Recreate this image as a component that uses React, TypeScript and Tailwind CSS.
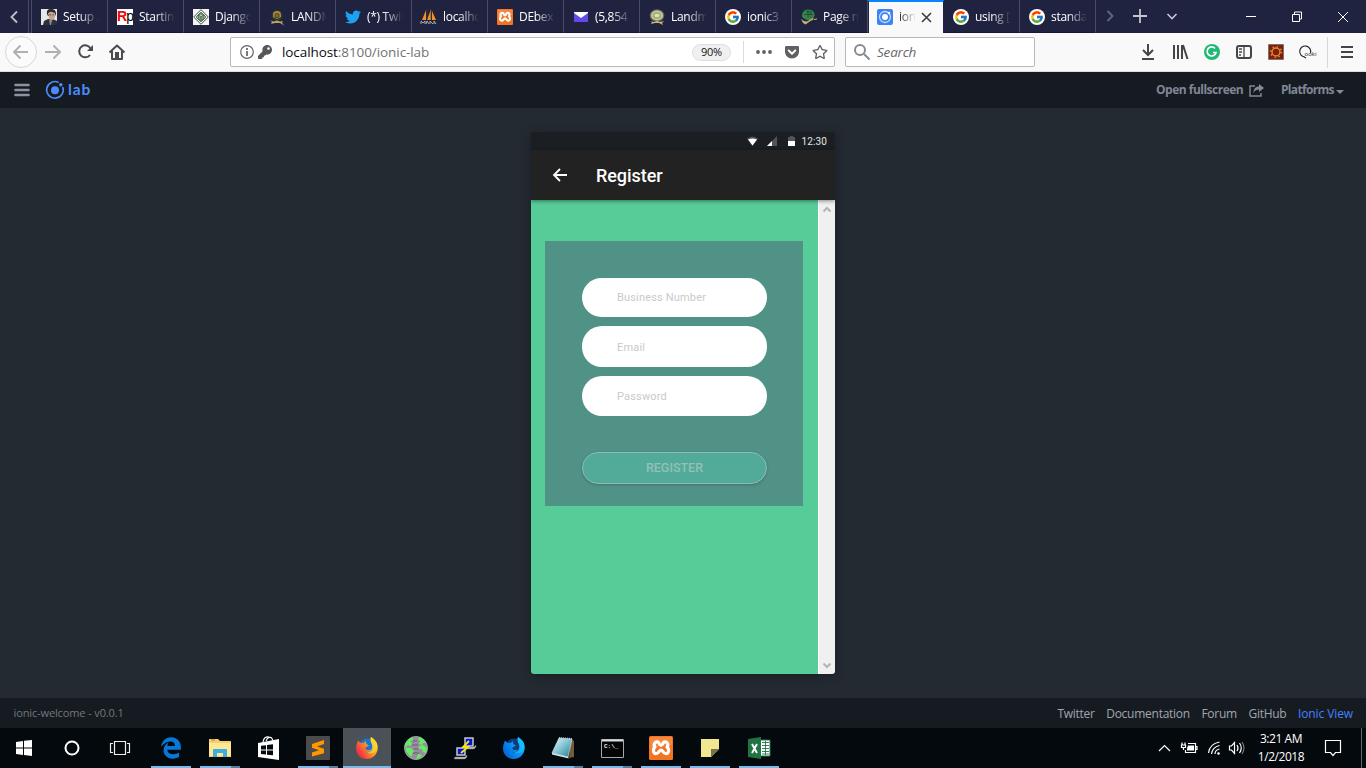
import type { ReactNode } from "react";
import { FcGoogle } from "react-icons/fc";
import { FaTwitter, FaEdgeLegacy, FaGetPocket, FaKey, FaRegStar } from "react-icons/fa";

const svg = "block shrink-0 overflow-visible";

function Google() {
  return (
    <span className="flex size-4 items-center justify-center rounded-full bg-white">
      <FcGoogle className="size-[14px]" />
    </span>
  );
}

function Xampp({ big = false }: { big?: boolean }) {
  return (
    <svg viewBox="0 0 24 24" className={big ? "block size-6" : "block size-4"}>
      <rect width="24" height="24" rx="1.500" fill="#f47321" />
      <path d="M1 1h22v8q-11 0-22 4z" fill="#fa9a5c" opacity=".5" />
      <path
        d="M9 6c-3-1-5 2.500-3 5-2.500 2-2 7 1.500 6.500 2.500-.3 2.500-3.500 4.500-3.500s2 3.200 4.500 3.500c3.500.5 4-4.500 1.500-6.500 2-2.500 0-6-3-5-1.600.6-1 3.500-3 3.500S10.600 6.600 9 6z"
        fill="none"
        stroke="#fff"
        strokeWidth="3.200"
        strokeLinejoin="round"
      />
    </svg>
  );
}

function Portrait() {
  return (
    <svg viewBox="0 0 16 16" className={`${svg} size-4`}>
      <path fill="#e5e7e8" d="M0 0h16v16H0z" />
      <path fill="#2e3236" d="M2 16l1-4 4-2h5l4 2v4z" />
      <path fill="#23272a" d="M6 5q-1-5 4-5 5 0 5 5l-1 2H7z" />
      <path fill="#c9a18e" d="M7 4l3-1.500L14 4v4l-2 3-2 .500L8 9z" />
      <path fill="#87929b" d="M8 10l3 1.500L10 16H9z" />
      <path fill="#333" d="M8.500 5.500h1.500v.8H8.500zm3 0H13v.8h-1.500z" />
    </svg>
  );
}

function Diamond() {
  return (
    <svg viewBox="0 0 16 16" className={`${svg} size-4`}>
      <path fill="#f4f5f2" d="M0 0h16v16H0z" />
      <path d="M8 .7L15.300 8 8 15.300.7 8z" fill="none" stroke="#454f48" strokeWidth="1" />
      <path d="M8 3L13 8 8 13 3 8z" fill="#dce8dd" stroke="#44604c" strokeWidth=".8" />
      <path d="M5 6l3-1.500L11 6v4l-3 1.500L5 10zM5 6l3 1.500L11 6M8 7.500v4" fill="#86ab8f" stroke="#325942" strokeWidth=".8" />
    </svg>
  );
}

function Crest({ light = false }: { light?: boolean }) {
  return light ? (
    <svg viewBox="0 0 16 16" className={`${svg} size-4`}>
      <ellipse cx="8" cy="6.500" rx="7.300" ry="6.300" fill="#6f6a55" />
      <ellipse cx="8" cy="6.500" rx="6" ry="5" fill="#cfc89c" />
      <ellipse cx="8" cy="6.500" rx="4.300" ry="3.500" fill="#8fb67c" />
      <ellipse cx="8" cy="6.500" rx="2.500" ry="1.800" fill="#e3dfae" />
      <path d="M1 12l4 1 3-1 3 1 4-1-2 2 1 2-4-2H6l-4 1 1-2z" fill="#cdb978" />
    </svg>
  ) : (
    <svg viewBox="0 0 16 16" className={`${svg} size-4`}>
      <ellipse cx="8" cy="6.500" rx="5.500" ry="5.500" fill="#2c3a26" />
      <path d="M4 6q0-4 4-4t4 4v2l-4 2-4-2z" fill="#a58a45" />
      <circle cx="8" cy="6.500" r="2.600" fill="#31592f" />
      <circle cx="8" cy="6.500" r="1.500" fill="#c24a30" />
      <path d="M1 11.500l4 1 3-1 3 1 3-.500-1 1.500 2 3-4-2.500H6l-4 1 1-2z" fill="#c0a263" />
    </svg>
  );
}

function Sails() {
  return (
    <svg viewBox="0 0 16 16" className={`${svg} size-4`}>
      <path d="M5 1L1 11h4zm5-1L6 11h4zM11 2v9h4z" fill="#f29122" />
      <path d="M6 0v11M10 0v11" stroke="#473a36" strokeWidth=".7" />
      <path d="M0 15v-3l2 2 2-2v3m1 0l1-3 2 3m1 0v-3l3 3m1 0v-3l2 3" stroke="#aaa" fill="none" />
    </svg>
  );
}

function Turtle() {
  return (
    <svg viewBox="0 0 16 16" className={`${svg} size-4`}>
      <path d="M1 7q0-6 6-6.500 6.500 0 6.500 6l-1.500 4-5 1L2 9z" fill="#2c8a4d" />
      <path d="M3 5.500h9M5 3h6M7 1v8M10 2v7" stroke="#12502f" strokeWidth=".9" />
      <path d="M4.500 7h2m3 0h2" stroke="#b64535" strokeWidth="1.300" />
      <path d="M0 10l3 2 3 .500 6-3.500.500 1.500-3 1.500-5 3.500-2.500-1.500z" fill="#c7b16a" />
      <path d="M13 10.500l3-.500" stroke="#c7b16a" />
    </svg>
  );
}

function IonicMark({ tab = false }: { tab?: boolean }) {
  return tab ? (
    <svg viewBox="0 0 16 16" className={`${svg} size-4`}>
      <rect width="16" height="16" rx="2" fill="#3e83f3" />
      <circle cx="8" cy="8" r="5.500" fill="none" stroke="#c5dcff" strokeWidth="1.300" />
      <circle cx="8" cy="8" r="3" fill="#fff" />
      <circle cx="12" cy="4" r="1.300" fill="#fff" />
    </svg>
  ) : (
    <svg viewBox="0 0 20 20" className={`${svg} size-5`}>
      <path d="M13.700 2.500A8.300 8.300 0 1 0 17.700 7" fill="none" stroke="#4b8bff" strokeWidth="1.600" />
      <circle cx="10" cy="10.300" r="4" fill="#4b8bff" />
      <circle cx="15.800" cy="4.700" r="1.800" fill="#4b8bff" />
    </svg>
  );
}

function Mail() {
  return (
    <svg viewBox="0 0 16 16" className={`${svg} size-4`}>
      <path fill="#6549e8" d="M1 3h14v10H1z" />
      <path fill="#fff" d="M1 3h14v1L8 9 1 4z" />
    </svg>
  );
}

const tabs: { icon: ReactNode; label: string; active?: boolean }[] = [
  { icon: <Portrait />, label: "Setup a" },
  {
    icon: (
      <span className="flex size-4 items-center justify-center overflow-hidden bg-white font-['Liberation_Sans'] text-[14px] tracking-[-1px] text-black">
        <b className="text-[#ed0712]">R</b>p
      </span>
    ),
    label: "Starting",
  },
  { icon: <Diamond />, label: "Django" },
  { icon: <Crest />, label: "LANDM" },
  { icon: <FaTwitter className="size-4 text-[#1da1f2]" />, label: "(*) Twitt" },
  { icon: <Sails />, label: "localhos" },
  { icon: <Xampp />, label: "DEbex" },
  { icon: <Mail />, label: "(5,854 u" },
  { icon: <Crest light />, label: "Landma" },
  { icon: <Google />, label: "ionic3" },
  { icon: <Turtle />, label: "Page no" },
  { icon: <IonicMark tab />, label: "ionic", active: true },
  { icon: <Google />, label: "using [i" },
  { icon: <Google />, label: "standar" },
];

function Tab({ icon, label, active }: { icon: ReactNode; label: string; active?: boolean }) {
  return (
    <div
      className={
        active
          ? "flex h-[33px] w-[76px] shrink-0 items-center border-x border-t-2 border-x-[#202340] border-t-[#0a84ff] bg-[#f9f9fa] pl-2 pb-[1px] text-[#333]"
          : "flex h-[33px] w-[76px] shrink-0 items-center border-r border-b border-r-[#4b4c63] border-b-[#161733] pt-[1px] pl-[9px] text-white"
      }
    >
      {icon}
      <span
        className={
          active
            ? "ml-1.5 w-[17px] overflow-hidden mask-r-from-10% text-[12px] tracking-[-0.2px] whitespace-nowrap"
            : "ml-1.5 w-[36px] overflow-hidden mask-r-from-45% text-[12px] font-medium tracking-[-0.3px] whitespace-nowrap"
        }
      >
        {label}
      </span>
      {active && (
        <svg viewBox="0 0 10 10" className={`${svg} ml-[6px] size-[9px]`}>
          <path d="M0 0l10 10M10 0L0 10" stroke="#3b3b3e" strokeWidth="1.700" />
        </svg>
      )}
    </div>
  );
}

function TabBar() {
  return (
    <div className="flex h-[33px] bg-[#202340]">
      <div className="mr-[3px] flex w-[29px] items-center justify-center border-r border-[#4b4c63]">
        <svg viewBox="0 0 8 12" className={`${svg} h-3 w-2`}>
          <path d="M7 .5L1.500 6 7 11.500" fill="none" stroke="#c0c0cc" strokeWidth="1.800" />
        </svg>
      </div>
      <div className="-ml-px w-px bg-[#4b4c63]" />
      {tabs.map((t) => (
        <Tab key={t.label} {...t} />
      ))}
      <svg viewBox="0 0 270 33" className={`${svg} h-[33px] w-[270px]`} fill="none">
        <path d="M11.500 11l5 5-5 5" stroke="#66687d" strokeWidth="1.800" />
        <path d="M37 16h14M44 9v14" stroke="#c5c5d0" strokeWidth="1.800" />
        <path d="M71.500 14l4.500 4.500 4.500-4.500" stroke="#c5c5d0" strokeWidth="1.600" />
        <path d="M150 16.500h10M196.500 14.500h7v7h-7zM198.500 14v-2h7v7h-2M242 12l10 10M252 12l-10 10" stroke="#fff" />
      </svg>
    </div>
  );
}

function NavBar() {
  return (
    <div className="flex h-[39px] items-center border-b border-[#dedee0] bg-[#f9f9fa]">
      <svg viewBox="0 0 230 38" className={`${svg} h-[38px] w-[230px]`} fill="none">
        <circle cx="21" cy="19" r="15.500" fill="#fbfbfb" stroke="#d8d8d8" />
        <path d="M28 19H14m6.500-6.500L14 19l6.500 6.500M45 19h15m-6.500-6.500L60 19l-6.500 6.500" stroke="#b0b0b1" strokeWidth="1.900" />
        <path d="M90.500 15.500A6 6 0 1 0 90 22" stroke="#4a4a4f" strokeWidth="2" />
        <path d="M93 12v6h-6z" fill="#4a4a4f" />
        <path d="M109.500 19.500l7.500-7 7.500 7M112 18v8h10v-8" stroke="#4a4a4f" strokeWidth="2" strokeLinejoin="round" />
        <path d="M115 19h4v6h-4z" fill="#4a4a4f" />
      </svg>
      <div className="flex h-[30px] w-[605px] items-center rounded-[2px] border border-[#b8b8bb] bg-white pl-[9px]">
        <svg viewBox="0 0 14 14" className={`${svg} size-3.5`} fill="none">
          <circle cx="7" cy="7" r="6.300" stroke="#68686b" strokeWidth="1.200" />
          <path d="M7 6v5M7 3v2" stroke="#58585b" strokeWidth="1.600" />
        </svg>
        <FaKey className="ml-[4px] size-[14px] text-[#58585b]" />
        <span className="ml-[10px] w-[410px] pt-px text-[13.500px] tracking-[-0.08px] text-[#737373]">
          <span className="text-[#0c0c0d]">localhost</span>:8100/ionic-lab
        </span>
        <span className="flex h-[17px] w-[39px] items-center justify-center rounded-full border border-[#dedede] bg-[#f0f0f1] pt-px text-[11px] tracking-[-0.3px] text-[#111]">
          90%
        </span>
        <span className="ml-3 h-[22px] w-px bg-[#dcdcdc]" />
        <svg viewBox="0 0 16 4" className={`${svg} ml-3 h-1 w-4`} fill="#606063">
          <circle cx="2" cy="2" r="1.900" />
          <circle cx="8" cy="2" r="1.900" />
          <circle cx="14" cy="2" r="1.900" />
        </svg>
        <FaGetPocket className="ml-3 size-4 text-[#606063]" />
        <FaRegStar className="ml-[12px] size-4 text-[#606063]" />
      </div>
      <div className="ml-2.5 flex h-[30px] w-[190px] items-center rounded-[2px] border border-[#b8b8bb] bg-white pl-2">
        <svg viewBox="0 0 16 16" className={`${svg} size-4`} fill="none" stroke="#8a8a8d" strokeWidth="2">
          <circle cx="6" cy="6" r="5" />
          <path d="M10 10l5.500 5.500" />
        </svg>
        <span className="ml-[7px] pt-px text-[13.500px] tracking-[-0.2px] text-[#68686b] italic">Search</span>
      </div>
      <svg viewBox="1035 0 331 38" className={`${svg} h-[38px] w-[331px]`} fill="none" stroke="#454549" strokeWidth="2">
        <path d="M1148 11v11m-5-5l5 5 5-5M1142 26h12M1174 12v14M1178 12v14M1182 12v14M1183 12l4.500 14" />
        <circle cx="1212" cy="19" r="8" fill="#20b875" stroke="none" />
        <path d="M1215 15.500a4.500 4.500 0 1 0 1 4h-3" stroke="#fff" strokeWidth="1.700" />
        <rect x="1237" y="13" width="14" height="12" rx="2" />
        <path d="M1244 13v12M1239 16h3M1239 19h3M1239 22h2" strokeWidth="1.300" />
        <path d="M1268.500 11.500h15v15h-15z" fill="#811d09" stroke="#777" strokeWidth="1" />
        <circle cx="1276" cy="19" r="4" stroke="#dc9030" strokeWidth="1.500" />
        <circle cx="1276" cy="19" r="5.500" stroke="#dc9030" strokeWidth="1.300" strokeDasharray="1.500 2.820" />
        <path d="M1305 24a5.500 5.500 0 1 1 5.500-4M1304 24l2 1" stroke="#222" strokeWidth="1.100" />
        <text x="1304.500" y="22.500" fill="#222" stroke="none" fontSize="6" fontFamily="Open Sans" textLength="12">ooki</text>
        <path d="M1327.500 4v31" stroke="#d8d8d9" strokeWidth="1" />
        <path d="M1341 14h12M1341 19h12M1341 24h12" />
      </svg>
    </div>
  );
}

function LabHeader() {
  return (
    <header className="flex h-9 items-center bg-[#161b21] pl-[14px] text-[12px] font-bold text-[#7f8794]">
      <svg viewBox="0 0 16 14" className={`${svg} h-3.5 w-4`}>
        <path d="M1.500 2h13M1.500 7h13M1.500 12h13" stroke="#8b93a2" strokeWidth="2.600" strokeLinecap="round" />
      </svg>
      <div className="ml-[15px] flex items-center">
        <IonicMark />
        <span className="ml-[3px] font-[Lato] text-[15.500px] font-bold tracking-[0.9px] text-[#4b8bff]">lab</span>
      </div>
      <span className="ml-auto w-[90px] tracking-[-0.5px] whitespace-nowrap">Open fullscreen</span>
      <svg viewBox="0 0 15 13" className={`${svg} ml-[3px] h-[13px] w-[15px]`} fill="none">
        <path d="M6 2H1v10h11V9" stroke="#838b98" strokeWidth="1.400" />
        <path d="M10 0l5 4-5 4V5.500C7 5.500 5.500 7 4.500 9 4.500 5 6.500 2.500 10 2.500z" fill="#838b98" />
      </svg>
      <span className="ml-[17px] w-[54px] tracking-[-0.68px]">Platforms</span>
      <span className="mt-[3px] mr-[21px] ml-[1px] border-x-[4px] border-t-[4px] border-x-transparent border-t-[#838b98]" />
      <span className="w-px" />
    </header>
  );
}

function Field({ label, tall }: { label: string; tall: string }) {
  return (
    <div className={`${tall} flex items-center rounded-[20px] bg-white pl-[35px] text-[11px] tracking-[0.17px] text-[#c9c9c9]`}>
      {label}
    </div>
  );
}

function Phone() {
  return (
    <div className="flex h-[542px] w-[304px] flex-col overflow-hidden rounded-[3px] bg-[#222] font-[Roboto] shadow-[0_2px_12px_rgba(0,0,0,0.3)]">
      <div className="flex h-[18px] shrink-0 items-center justify-end bg-[#1b1e22] pr-2 text-[10px] text-[#e5e5e5]">
        <svg viewBox="0 0 50 12" className={`${svg} mr-[5px] h-3 w-[50px]`}>
          <path d="M0 3.500q5.500-4 11 0L5.500 11z" fill="#4b4d50" />
          <path d="M1 4.500q4.500-2 9 0l-4.500 6z" fill="#fff" />
          <path d="M20 11l10-10v10z" fill="#525456" />
          <path d="M20 11l5-5v5z" fill="#fff" />
          <path d="M41 2h2V1h3v1h2v9h-7z" fill="#525456" />
          <path d="M41 6h7v5h-7z" fill="#fff" />
        </svg>
        <span className="tracking-[0.1px]">12:30</span>
      </div>
      <div className="z-10 flex h-[50px] shrink-0 items-center bg-[#222] pl-[21px] shadow-[0_1px_4px_rgba(0,0,0,0.45)]">
        <svg viewBox="0 0 16 14" className={`${svg} h-3.5 w-4`}>
          <path d="M15 7H2m6-6L2 7l6 6" fill="none" stroke="#fff" strokeWidth="1.800" />
        </svg>
        <h1 className="ml-7 pt-[2px] text-[18px] leading-6 font-medium tracking-[-0.05px] text-white">Register</h1>
      </div>
      <div className="flex min-h-0 flex-1">
        <div className="w-[287px] bg-[#57cc98] pt-[41px] pl-[14px]">
          <div className="h-[265px] w-[258px] bg-[#519287] pt-[37px] pr-9 pl-[37px]">
            <Field label="Business Number" tall="mb-[9px] h-[39px] pt-px" />
            <Field label="Email" tall="mb-[9px] h-[41px] pt-[3px]" />
            <Field label="Password" tall="mb-9 h-10 pt-[2px]" />
            <button className="flex h-8 w-full items-center justify-center rounded-full border border-[#8dbcb2] bg-[#52ab99] text-[12.500px] font-medium text-[#92c1b7] shadow-[0_1px_3px_rgba(0,0,0,0.22)]">
              REGISTER
            </button>
          </div>
        </div>
        <div className="flex flex-1 flex-col items-center justify-between border-l border-white bg-[#f0f0f0] pt-1.5 pr-px pb-[5px]">
          <svg viewBox="0 0 8 7" className={`${svg} h-[7px] w-2`}>
            <path d="M.5 5.500L4 2l3.500 3.500" fill="none" stroke="#b4b4b4" strokeWidth="2" />
          </svg>
          <svg viewBox="0 0 8 7" className={`${svg} h-[7px] w-2`}>
            <path d="M.5 1.500L4 5l3.500-3.500" fill="none" stroke="#b4b4b4" strokeWidth="2" />
          </svg>
        </div>
      </div>
    </div>
  );
}

function Explorer() {
  return (
    <svg viewBox="0 0 22 20" className={`${svg} h-5 w-[22px]`}>
      <path d="M0 1h9l2 2h11v16H0z" fill="#f4d06c" />
      <path d="M0 5h22v13H0z" fill="#ffe693" />
      <path d="M2 2h4" stroke="#b68326" />
      <path d="M4 19v-7q0-1 1-1h12q1 0 1 1v7h-4v-4H8v4z" fill="#38aee5" />
    </svg>
  );
}

function Store() {
  return (
    <svg viewBox="0 0 22 24" className={`${svg} h-6 w-[22px]`}>
      <path d="M0 7l21-4v21L0 21z" fill="#fff" />
      <path d="M5 6q1-6 6-5 3 0 4 4M8 5q2-5 6-3" fill="none" stroke="#fff" strokeWidth="1.200" />
      <path d="M3 9.800l5-.6v4.300H3zm6-.7l6-.8v5.200H9zM3 14.500h5v4l-5-.4zm6 0h6v4.700l-6-.5z" fill="#050b0e" />
    </svg>
  );
}

function Sublime() {
  return (
    <svg viewBox="0 0 24 24" className={`${svg} size-6`}>
      <rect width="24" height="24" rx="1" fill="#4b4b4b" />
      <path d="M6 8l12-4v4l-7 2.400 7 2.300v4.500L6 20.500v-4l7-2.300-7-2.500z" fill="#ff9800" />
    </svg>
  );
}

function Fox({ dev = false }: { dev?: boolean }) {
  const id = dev ? "foxDev" : "fox";
  return (
    <svg viewBox="0 0 24 24" className={`${svg} size-6`}>
      <defs>
        <linearGradient id={id} x1="1" x2="0" y1=".1" y2=".8">
          <stop stopColor={dev ? "#16d9ff" : "#fff044"} />
          <stop offset=".45" stopColor={dev ? "#0797ff" : "#ff9620"} />
          <stop offset="1" stopColor={dev ? "#075fcc" : "#ed174f"} />
        </linearGradient>
      </defs>
      <circle cx="12" cy="11" r="8.500" fill={dev ? "#143a75" : "#1775d3"} />
      <path
        d="M3 4.500l2.500 2.500Q7 6.500 8.500 7L11 5l.300 3 2.700 1.500-3 1.800c-1 1-.5 2.500 1 2.700 1.500.4 2-.7 3.500-.2-1 2.500-3.500 2.700-5.500 1.700 3 3 8 1.500 8-3.500 0-3-1-4.500-2-5.500V1c3 2 5.500 4 6.500 8 1.500 7-3.500 14-10.500 14S1 18 1 12.500C1 9 2 7.500 3 4.500z"
        fill={`url(#${id})`}
      />
      <path d="M16 1c-2 3 .5 4.500 1 8 1 5-3 8-6 7 4 3 10 1 11-4V9c-1-4-3-6-6-8z" fill={dev ? "#15bfff" : "#ffd52e"} opacity=".75" />
    </svg>
  );
}

function Globe() {
  return (
    <svg viewBox="0 0 24 24" className={`${svg} size-6`}>
      <circle cx="12" cy="12" r="11.500" fill="#9a8c9e" stroke="#8fae92" />
      <path
        d="M5 3l4-2 0 3-3 1 2 2-1 3-3-1-3 3 0-4zM2 12l5 0 3 3-2 3 0 3-3-2-3-4zM15 1l4 2 3 4-3 0-1 2-3-1 1-3-2-2zM15 10l4-1 4 3-1 5-3-1-1-3-3 0zM14 18l4 1-2 3-4 1z"
        fill="#62ee62"
      />
      <path d="M9 5l4 0M8 9h6M10 13h4M9 17h6" stroke="#6c5f72" strokeWidth="1.200" />
    </svg>
  );
}

function Putty() {
  return (
    <svg viewBox="0 0 24 24" className={`${svg} size-6`}>
      <path d="M12 2h8v8h-8zM4 12h8v7H4z" fill="#0714d3" stroke="#c8c8c8" strokeWidth="1.500" />
      <path d="M11 11h10l2-2v2l-2 2H11zM2 21h10l2-2v2l-2 2H1z" fill="#c9c9c9" stroke="#666" strokeWidth=".5" />
      <path d="M16 5l-6 6h5l-7 6" fill="none" stroke="#f1e713" strokeWidth="1.800" />
    </svg>
  );
}

function Notepad() {
  return (
    <svg viewBox="0 0 24 24" className={`${svg} size-6`}>
      <defs>
        <linearGradient id="paper" x1="0" y1="0" x2="1" y2="1">
          <stop stopColor="#e6fafd" />
          <stop offset=".5" stopColor="#7fc3d1" />
          <stop offset="1" stopColor="#23798f" />
        </linearGradient>
      </defs>
      <path d="M20 3l3 2v16l-5 1z" fill="#745c3b" />
      <path d="M8 2l13 1-4 18-16-4z" fill="url(#paper)" stroke="#c5e4e9" strokeWidth=".7" />
      <path d="M1 17l16 4 1 1.500L1 18.500z" fill="#dceeee" />
      <path d="M8 2l13 1" stroke="#b6c6cb" strokeWidth="2" strokeDasharray="1 1" />
    </svg>
  );
}

function Terminal() {
  return (
    <svg viewBox="0 0 23 19" className={`${svg} h-[19px] w-[23px]`}>
      <path d="M.5.500h22v18H.5z" fill="#050505" stroke="#a4a9ad" />
      <path d="M1 1.500h21" stroke="#d6dde0" strokeWidth="2" />
      <text x="3" y="9" fill="#eee" fontSize="6" fontWeight="bold" fontFamily="Liberation Mono">C:\_</text>
    </svg>
  );
}

function Note() {
  return (
    <svg viewBox="0 0 18 18" className={`${svg} size-[18px]`}>
      <path fill="#f1e793" d="M0 0h18v10l-8 8H0z" />
      <path fill="#77734a" d="M10 10h8l-8 8z" />
    </svg>
  );
}

function Excel() {
  return (
    <svg viewBox="0 0 23 22" className={`${svg} h-[22px] w-[23px]`}>
      <path d="M12 3h10v16H12z" fill="#fff" stroke="#207346" />
      <path d="M14 5.500h7M14 8.500h7M14 11.500h7M14 14.500h7M14 17h7M17.500 4v14" stroke="#207346" strokeWidth=".9" />
      <path d="M0 2l13-2v22L0 20z" fill="#217346" />
      <path d="M4 7l5 9M9 7l-5 9" stroke="#fff" strokeWidth="1.900" />
    </svg>
  );
}

const apps: { name: string; icon: ReactNode; state?: "one" | "many" | "focus" }[] = [
  { name: "edge", icon: <FaEdgeLegacy className="size-[22px] text-[#0878d8]" />, state: "one" },
  { name: "explorer", icon: <Explorer />, state: "many" },
  { name: "store", icon: <Store /> },
  { name: "sublime", icon: <Sublime />, state: "many" },
  { name: "firefox", icon: <Fox />, state: "focus" },
  { name: "globe", icon: <Globe /> },
  { name: "putty", icon: <Putty /> },
  { name: "firefox-dev", icon: <Fox dev /> },
  { name: "notepad", icon: <Notepad />, state: "many" },
  { name: "terminal", icon: <Terminal />, state: "many" },
  { name: "xampp", icon: <Xampp big />, state: "one" },
  { name: "note", icon: <Note />, state: "one" },
  { name: "excel", icon: <Excel />, state: "one" },
];

function Taskbar() {
  return (
    <div className="flex h-10 bg-[#03090c]">
      <svg viewBox="0 0 147 40" className={`${svg} h-10 w-[147px]`} fill="none">
        <path d="M16 14l7-1v6.500h-7zm8-1.200l8-.8v7.500h-8zM16 20.500h7V27l-7-1zm8 0h8V28l-8-.9z" fill="#fff" />
        <circle cx="72" cy="20" r="6.500" stroke="#fff" strokeWidth="2" />
        <path d="M114.500 13.500h11v13h-11zM113 15.500h-2.500v9h2.500M127 15.500h2.500v9H127" stroke="#eee" strokeWidth="1.200" />
      </svg>
      <div className="flex gap-px">
        {apps.map(({ name, icon, state }) => (
          <div key={name} className={state === "focus" ? "flex w-12 flex-col bg-[#4b5257]" : "flex w-12 flex-col"}>
            <div className="flex h-[38px] items-center justify-center pt-[2px]">{icon}</div>
            {state === "focus" && <div className="h-0.5 bg-[#76b9ed]" />}
            {state === "one" && <div className="mx-1 h-0.5 bg-[#76b9ed]" />}
            {state === "many" && (
              <div className="mx-1 flex h-0.5">
                <span className="w-[31px] bg-[#76b9ed]" />
                <span className="w-[9px] bg-[#557f9f]" />
              </div>
            )}
          </div>
        ))}
      </div>
      <svg viewBox="1150 0 98 40" className={`${svg} ml-auto h-10 w-[98px]`} fill="none" stroke="#fff" strokeWidth="1.200">
        <path d="M1159 23l5.500-5.500L1170 23" />
        <path d="M1188 15.500h7.500v9h-10V22M1196 18.500h1v3h-1" />
        <path d="M1188 17.500h6v5h-7v-2z" fill="#fff" stroke="none" />
        <path d="M1181.500 17h4v2.500h-4zM1182 14.500v2M1185 14.500v2M1183.500 19v3" />
        <path d="M1208.500 25q1-9 11-11M1211.500 26q1-7 8-8.500M1215 26q0-4 4.500-5" />
        <circle cx="1218.500" cy="25.500" r="1.300" fill="#fff" stroke="none" />
        <path d="M1229.500 18h2l3-3.500v11l-3-3.500h-2zM1237 17q2 3 0 6M1239.500 15q3.500 5 0 10" />
        <path d="M1242 14q4 6 0 12" stroke="#777" />
      </svg>
      <div className="w-[66px] pt-[2px] text-center text-[12px] leading-[18px] tracking-[-0.45px] text-white">
        <div>3:21 AM</div>
        <div>1/2/2018</div>
      </div>
      <svg viewBox="0 0 52 40" className={`${svg} h-10 w-[52px]`} fill="none">
        <path d="M11.500 12.500h15v12h-5l-2.500 3-2.500-3h-5z" stroke="#fff" strokeWidth="1.200" />
        <path d="M47.500 0v40" stroke="#60676b" />
      </svg>
    </div>
  );
}

export default function App() {
  return (
    <div className="flex h-[768px] w-[1366px] flex-col overflow-hidden bg-[#242931] font-['Open_Sans','Noto_Sans',sans-serif]">
      <TabBar />
      <NavBar />
      <LabHeader />
      <main className="flex h-[590px] justify-center bg-[#242a32] pt-6">
        <Phone />
      </main>
      <footer className="flex h-[30px] items-center justify-between bg-[#161b21] pt-px pr-[13px] pl-[13.500px] text-[12px] text-[#a1a6ae]">
        <span className="text-[11px] tracking-[-0.12px] text-[#73777c]">ionic-welcome - v0.0.1</span>
        <nav className="flex gap-[11.500px] tracking-[-0.26px]">
          <span>Twitter</span>
          <span>Documentation</span>
          <span>Forum</span>
          <span>GitHub</span>
          <span className="tracking-[-0.1px] text-[#4581ff]">Ionic View</span>
        </nav>
      </footer>
      <Taskbar />
    </div>
  );
}
